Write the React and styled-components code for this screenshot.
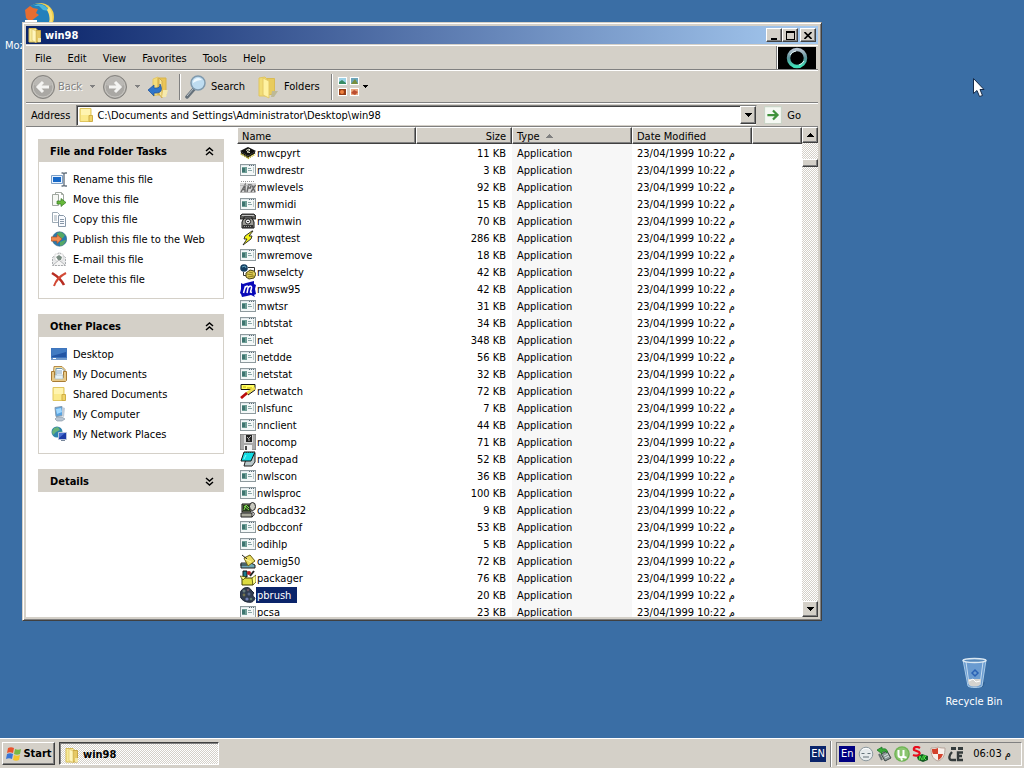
import React from "react";
import styled, { createGlobalStyle } from "styled-components";

const GlobalStyle = createGlobalStyle`
  * {
    box-sizing: border-box;
  }

  body {
    margin: 0;
    overflow: hidden;
    background: #3a6ea5;
    color: #000;
    font-family: "DejaVu Sans Condensed", "DejaVu Sans", sans-serif;
    font-size: 11px;
    line-height: 13px;
  }

  button,
  input {
    font: inherit;
    color: inherit;
    border-radius: 0;
  }

  svg {
    display: block;
    flex: none;
  }
`;

/* ---------- small icons, all on a 16px grid ---------- */

const glyphs = {
  folder: (
    <>
      <path d="M2 1.5h7l1 1V15H2z" fill="#f8eb9a" stroke="#d8bd55" />
      <path d="M9 3.5h4.5V15H9z" fill="#e6c964" stroke="#c9a843" />
      <path d="M5 2l4 2v11.5l-4-2z" fill="#fff6bd" stroke="#dcc467" strokeWidth=".7" />
      <path d="M11 11h3v4h-3z" fill="#f4e7a6" />
    </>
  ),
  folderClosed: (
    <>
      <path d="M2 1.5h11v13H2z" fill="#fbea8c" stroke="#e0c55f" />
      <path d="M3 2h9v6H3z" fill="#fff4b0" />
      <path d="M11 8.5h3.5v6H11z" fill="#f0d468" stroke="#cfae45" />
    </>
  ),
  app: (
    <g shapeRendering="crispEdges">
      <path d="M0 2h16v12H0z" fill="#8e9a9e" />
      <path d="M1 3h14v10H1z" fill="#f4f8f8" />
      <path d="M1 3h14v1H1z" fill="#dfe7ea" />
      <path d="M9 3h1v1H9zM11 3h1v1h-1zM13 3h1v1h-1z" fill="#5c6c78" />
      <path d="M2 5h5v6H2z" fill="#6f9f97" />
      <path d="M2 6h3v4H2z" fill="#3d746f" />
      <path d="M8 6h3v1H8zM8 8h4v1H8z" fill="#8aa7a7" />
      <path d="M13 5h1v6h-1z" fill="#bccaca" />
    </g>
  ),
  chip: (
    <>
      <path d="M0 6l8-4 8 4-8 5z" fill="#111" />
      <path d="M1 7.5l7 4.500 7-4.500" fill="none" stroke="#111" strokeWidth="1.500" />
      <path d="M1 9l7 4 7-4" fill="none" stroke="#b5a91c" strokeWidth="2" strokeDasharray="1 1" />
      <path d="M6 5.500l3-1.500 1 1-3 2 3 .500" stroke="#e8e8d0" fill="none" />
    </>
  ),
  apx: (
    <>
      <path d="M0 4h16v10H0z" fill="#d8d8d8" />
      <path d="M1 2.500h14" stroke="#999" strokeDasharray="1 1" />
      <path d="M1 13l4-7v7M3 10.500h2M7 13l1.500-7H11l-.500 3H8M15.500 6L11 13M12 6l3 7" fill="none" stroke="#666" strokeWidth="1.400" />
      <path d="M0 6.500h15M0 13.500h15" stroke="#aaa" strokeWidth=".700" />
    </>
  ),
  phone: (
    <>
      <path d="M4 5h8l2 4v6H2V9z" fill="#9a9a94" stroke="#111" />
      <path d="M0 6V3l2-2h12l2 2v3h-4V4H4v2z" fill="#5d5d5a" stroke="#111" strokeWidth=".8" />
      <path d="M2 2.500h12" stroke="#ddd" strokeWidth=".8" />
      <circle cx="8" cy="8.500" r="2.600" fill="#eee" stroke="#222" />
      <path d="M7 8h2v1H7z" fill="#333" />
      <path d="M3 12h10v3H3z" fill="#333" />
      <path d="M4 13.500h8" stroke="#999" strokeDasharray="1 1" />
    </>
  ),
  bolt: <path d="M12 1L5 6l-1 3h3l-4 6 8-6 1-3H9l4-5z" fill="#f6f619" stroke="#222" strokeWidth=".9" />,
  netTools: (
    <>
      <circle cx="4" cy="4" r="3.800" fill="#143f62" />
      <path d="M2 3l3-1 1 2" stroke="#61a4be" fill="none" />
      <path d="M8 3.500h6.500V7M3.500 8v3.500H7" fill="none" stroke="#333" />
      <path d="M6 9l4-3 4 1 2 3-2 4-5 1-3-2z" fill="#dccb54" stroke="#4a4417" />
      <path d="M7 10l6 1M8 13l6-1M9 8l4 1" stroke="#8f7e22" />
    </>
  ),
  mwave: (
    <>
      <path d="M1 2l2 1 3-1 8-2v3l2 1-1 4 1 5-2 1 1 2-4-2-4 1-5 1-1-3-1-1 1-4z" fill="#0808b8" />
      <path d="M3.500 12l2-7M5 7c2-3 3.500-2 3 0l-1 5M8 7c2-3 4-2 3.500 0l-1 4 1.500.500" fill="none" stroke="#fff" strokeWidth="1.500" />
    </>
  ),
  wand: (
    <>
      <path d="M1 1.500h14v5H1z" fill="#ffff60" stroke="#111" />
      <path d="M3 4h3M7 5h5" stroke="#c7a700" />
      <path d="M15 5l-9 6" stroke="#eedc52" strokeWidth="3" />
      <path d="M7 10l-6 5" stroke="#b90d0d" strokeWidth="2.800" />
      <path d="M15 7l-7 5" stroke="#111" />
    </>
  ),
  floppy: (
    <>
      <path d="M0 0h16v16H0z" fill="#a9a9a9" stroke="#777" />
      <path d="M4 1h9v8H4z" fill="#d9d9d9" />
      <path d="M6 1h6v7H6z" fill="#222" />
      <path d="M7 3l2 2v2M11 2L9 4" stroke="#ddd" strokeWidth=".8" fill="none" />
      <path d="M4 11h8v5H4z" fill="#f2f2f2" />
      <path d="M5 12h2v4H5z" fill="#444" />
    </>
  ),
  notepad: (
    <>
      <path d="M7 4l8-2v9l-3 4H4z" fill="#b9c7c9" stroke="#222" />
      <path d="M4 1h11l-4 9H1z" fill="#14dce3" stroke="#111" />
      <path d="M4 1.500h11" stroke="#333" strokeDasharray="1 1" />
      <path d="M6 4L4 8" stroke="#8bffff" />
    </>
  ),
  odbc: (
    <>
      <path d="M2 2h9v8H2z" fill="#8f9975" stroke="#111" />
      <path d="M3 3h7v6H3z" fill="#263a20" />
      <path d="M4 8l2-5 3 3M4 4l5 4" stroke="#82e34f" fill="none" />
      <path d="M1 11h11v4H1z" fill="#a9a99b" stroke="#222" />
      <ellipse cx="12.500" cy="4.500" rx="3" ry="4" fill="#c9c9bf" stroke="#222" />
      <path d="M12 10c3 0 3 3 0 5" fill="none" stroke="#111" />
    </>
  ),
  envelope: (
    <>
      <path d="M1 10h10l4 2v3H1z" fill="#70a8b5" stroke="#222" />
      <path d="M4 5l6-3 5 6-7 5z" fill="#e9db5e" stroke="#6c6115" />
      <path d="M2 2l5 4M0 12h7" stroke="#222" />
      <path d="M5 6l6 3" stroke="#fff7a1" />
    </>
  ),
  packager: (
    <>
      <path d="M3 1h4v6H3z" fill="#1b7c8e" stroke="#111" />
      <circle cx="9" cy="3" r="2" fill="#b82022" />
      <path d="M10 6l4-5" stroke="#222" strokeWidth="2" />
      <path d="M2 8h11v7H2z" fill="#dddc42" stroke="#424000" />
      <path d="M0 6l6 1-3 3zM12 8l4-3v7l-3 3z" fill="#ffff8b" stroke="#424000" strokeWidth=".7" />
    </>
  ),
  palette: (
    <>
      <path d="M1 4C4-1 10 0 11 3l3 3c-2 2-1 3 1 5-1 4-4 5-8 4C2 14-2 9 1 4z" fill="#303c50" stroke="#1b2538" />
      <circle cx="4" cy="4" r="1.500" fill="#657a7b" />
      <circle cx="8" cy="3" r="1.200" fill="#6a5966" />
      <circle cx="4" cy="8" r="1.400" fill="#73724e" />
      <circle cx="7" cy="12" r="1.600" fill="#7080b5" />
      <circle cx="11" cy="12" r="1.300" fill="#5b7b67" />
      <circle cx="9" cy="7" r="1.500" fill="#59688a" />
    </>
  ),
  rename: (
    <>
      <path d="M.5 4.500h11v8H.5z" fill="#e7f2ff" stroke="#7c9fc6" />
      <path d="M2 6h8v5H2z" fill="#1769c8" />
      <path d="M10.500 2h1.500l1 1 1-1h2M13 3v11M10.500 15h1.500l1-1 1 1h2" fill="none" stroke="#687582" strokeWidth="1.400" />
    </>
  ),
  move: (
    <>
      <path d="M4.500 1.500h6l2 2v8h-8z" fill="#fff" stroke="#a0a79f" />
      <path d="M1.500 3.500h6v11h-6z" fill="#f6f8f4" stroke="#a0a79f" />
      <path d="M10.500 1.500v2h2" fill="none" stroke="#a0a79f" />
      <path d="M6 10h4V7.500l5 4-5 4V13H6z" fill="#67b83a" stroke="#347823" strokeWidth=".7" />
    </>
  ),
  copy: (
    <>
      <path d="M1.500 1.500h5l2 2v8h-7z" fill="#fff" stroke="#9daab5" />
      <path d="M3 5h3M3 7h3M3 9h3" stroke="#9daab5" />
      <path d="M7.500 4.500h5l2 2v9h-7z" fill="#f9fbff" stroke="#8998a8" />
      <path d="M9 8.500h4M9 10.500h4M9 12.500h4" stroke="#8998a8" />
    </>
  ),
  publish: (
    <>
      <circle cx="8.500" cy="8" r="7.200" fill="#267aaf" stroke="#33627b" strokeWidth=".6" />
      <path d="M6 2l4-1 4 3-2 3-3 1-2-2zM9 11l5-2 1 1-3 4-3 1z" fill="#55a866" />
      <path d="M0 6h6V3.500l5 4.500-5 4.500V10H0z" fill="#f08b52" stroke="#b55024" strokeWidth=".7" />
    </>
  ),
  mail: (
    <>
      <path d="M1.500 6.500l7-5 6 5v8h-13z" fill="#e9eaeb" stroke="#a6a9ac" strokeDasharray="2 1" />
      <path d="M4 3h8v6l-4 2-4-2z" fill="#fff" stroke="#cbcbcb" strokeWidth=".6" />
      <path d="M5 6l3-2 3 2-1 3H7z" fill="#788b80" />
      <path d="M2 14l6-5 6 5" fill="#f5f5f5" stroke="#b4b6b8" />
    </>
  ),
  remove: (
    <>
      <path d="M1 2c5 3 9 6 12 12" fill="none" stroke="#b82d22" strokeWidth="2.600" />
      <path d="M15 2C9 5 5 9 3 15" fill="none" stroke="#d34a36" strokeWidth="2" />
    </>
  ),
  desktop: (
    <>
      <path d="M0 2h16v12H0z" fill="#3f75bd" />
      <path d="M1 3h14v8H1z" fill="#2456a4" />
      <path d="M1 3h14v3L1 10z" fill="#427bc2" />
      <path d="M0 12h16v2H0z" fill="#739acb" />
      <path d="M2 12h3v1H2z" fill="#fff" />
    </>
  ),
  documents: (
    <>
      <path d="M3 .500h8l3 3v9H2z" fill="#f4e2a5" stroke="#b58b48" />
      <path d="M5 2.500h6l2 2v7H5z" fill="#fafdff" stroke="#7096af" />
      <path d="M6 5h5M6 7h5" stroke="#83a6c3" />
      <path d="M.500 5.500h3v6h9v-6h3v9l-1 1h-13l-1-1z" fill="#e8c987" stroke="#a97c34" />
      <path d="M4 9h8v4H4z" fill="#e6f2f6" stroke="#9db4bd" strokeWidth=".600" />
    </>
  ),
  computer: (
    <>
      <path d="M4 1.500l7-1 1 9-7 1z" fill="#59a4e2" stroke="#8399ad" />
      <path d="M5 3l5-1 1 4-5 2z" fill="#a0d8ff" />
      <path d="M11 1l3 1-1 9-2-1z" fill="#c0cbd7" />
      <path d="M6 11h5l3 2-3 2H6l-2-2z" fill="#bac6d3" stroke="#7d8e9e" strokeWidth=".600" />
    </>
  ),
  network: (
    <>
      <circle cx="6" cy="6" r="5.500" fill="#2e83ac" />
      <path d="M3 2l4-1 2 3-4 2-3 3-1-3zM7 7l4-2-2 5z" fill="#67b37a" />
      <path d="M7.500 6.500h8v7h-8z" fill="#1c3ba6" stroke="#bac6dd" />
      <path d="M8 7h6l-6 5z" fill="#496fd1" />
      <path d="M10 14h4v1h-4z" fill="#77869a" />
    </>
  ),
  flag: (
    <>
      <path d="M3 2c2-1 4-1 6 0L8 7c-2-1-4-1-6 0z" fill="#e8542e" />
      <path d="M10 3c2 1 4 1 6 0l-1 5c-2 1-4 1-6 0z" fill="#79b943" />
      <path d="M2 8c2-1 4-1 6 0l-1 5c-2-1-4-1-6 0z" fill="#3975d5" />
      <path d="M9 9c2 1 4 1 6 0l-1 5c-2 1-4 1-6 0z" fill="#f4c52d" />
    </>
  ),
  face: (
    <>
      <circle cx="8" cy="8" r="6.800" fill="#e5eaec" stroke="#8d999f" />
      <path d="M3.500 7.500h3M9.500 7.500h3M5 11h6" stroke="#64737b" />
      <path d="M4 4c2-2 6-2 8 0" stroke="#fff" fill="none" />
    </>
  ),
  device: (
    <>
      <path d="M5 8l6-3 4 7-6 3z" fill="#8d9999" stroke="#3d4848" />
      <path d="M8 10l4-2M9 12l4-2" stroke="#dce4e4" />
      <path d="M1 4l5-3v2c4-1 6 1 5 4-1-2-3-2-5-1v2z" fill="#38aa37" stroke="#157220" strokeWidth=".7" />
      <path d="M3 8l3 6" stroke="#667171" strokeWidth="2" />
    </>
  ),
  torrent: (
    <>
      <circle cx="8" cy="8" r="7.800" fill="#6eb353" />
      <circle cx="8" cy="8" r="6.500" fill="#8bc570" />
      <path d="M4.500 4v5c0 3 5 3 5 0V4M9.500 9c0 2 1 3 3 2M7 11l1 3.500" fill="none" stroke="#fff" strokeWidth="2" />
    </>
  ),
  sound: (
    <>
      <path d="M8 2C5 0 1 1 2 4l5 2c2 2-1 5-6 3" fill="none" stroke="#e80c1c" strokeWidth="2.200" />
      <path d="M5 11l5-3 6 2v4l-5 2-5-2z" fill="#145b22" />
      <path d="M7 14l1-4 2 4M11 10v4M11 10h3l-2 2 2 2" fill="none" stroke="#4dec42" />
    </>
  ),
  shield: (
    <>
      <path d="M1 2c3 0 5 0 7-1 2 1 4 1 7 1 0 6-1 11-7 13C2 13 1 8 1 2z" fill="#f7efea" stroke="#b7a49a" />
      <path d="M2 3c2 0 4 0 6-1v6H3C2 6 2 5 2 3zM8 8h5c-1 3-2 5-5 6z" fill="#d3422c" />
    </>
  ),
  lang: (
    <>
      <path d="M3 1h5v3H3zM10 1h5v3h-5z" fill="#333b3c" />
      <path d="M4 6c-3 3-4 8 0 8h4M15 6.500h-5v7.500h5M10 10h4" fill="none" stroke="#343b3b" strokeWidth="2.400" />
    </>
  ),
  go: (
    <>
      <path d="M.500.500h15v15H.500z" fill="#f5f8f3" stroke="#cbd5c8" />
      <path d="M3 8h8M8 4l4 4-4 4" fill="none" stroke="#40913b" strokeWidth="2" />
    </>
  ),
};

const Icon = ({ name, size = 16 }) => (
  <svg width={size} height={size} viewBox="0 0 16 16" aria-hidden="true">
    {glyphs[name]}
  </svg>
);

const Caret = ({ up, color = "#000" }) => (
  <svg width="7" height="4" viewBox="0 0 7 4" shapeRendering="crispEdges" aria-hidden="true">
    <path d={up ? "M3 0h1v1h1v1h1v1h1v1H0V3h1V2h1V1h1z" : "M0 0h7v1H6v1H5v1H4v1H3V3H2V2H1V1H0z"} fill={color} />
  </svg>
);

const SmallCaret = ({ color = "#000" }) => (
  <svg width="5" height="3" viewBox="0 0 5 3" shapeRendering="crispEdges" aria-hidden="true">
    <path d="M0 0h5v1H4v1H3v1H2V2H1V1H0z" fill={color} />
  </svg>
);

const Chevrons = ({ down }) => (
  <svg width="9" height="9" viewBox="0 0 9 9" aria-hidden="true">
    <path
      d={down ? "M1 1l3.500 3L8 1M1 5l3.500 3L8 5" : "M1 4l3.500-3L8 4M1 8l3.500-3L8 8"}
      fill="none"
      stroke="#000"
      strokeWidth="1.500"
    />
  </svg>
);

const RoundArrow = ({ forward }) => (
  <svg width="26" height="26" viewBox="0 0 26 26" aria-hidden="true">
    <circle cx="13" cy="13" r="11.500" fill="#aaa8a4" stroke="#85837f" />
    <circle cx="13" cy="13" r="10" fill="none" stroke="#c8c6c1" />
    <path d="M4 11a9 8 0 0 1 18 0c-5 2-12 2-18 0z" fill="#bab8b4" />
    <path
      d={forward ? "M7 13h11M13 8l5 5-5 5" : "M19 13H8M13 8l-5 5 5 5"}
      fill="none"
      stroke="#f4f4f2"
      strokeWidth="3"
    />
  </svg>
);

const UpFolder = () => (
  <svg width="22" height="24" viewBox="0 0 22 24" aria-hidden="true">
    <path d="M5 4l5-2v18l-5 1z" fill="#f4dc79" stroke="#e3c769" />
    <path d="M10 3h8v17h-8z" fill="#eac557" stroke="#d8b44d" />
    <path d="M11 3l3 3v17l-3-4z" fill="#f8e69a" stroke="#d2ae4c" />
    <path d="M15 15h5l-2 7h-4z" fill="#f5e9ae" />
    <path d="M0 15l6-5v3h2c3 0 4-1 4-4 3 6 1 9-4 9H6v3z" fill="#2f75c9" stroke="#1c4f98" strokeWidth=".700" />
  </svg>
);

const Magnifier = () => (
  <svg width="22" height="24" viewBox="0 0 22 24" aria-hidden="true">
    <path d="M9 14l-7 8" stroke="#66717a" strokeWidth="3.500" strokeLinecap="round" />
    <path d="M8 14l-6 7" stroke="#b9c2c8" />
    <circle cx="13" cy="8" r="7" fill="#bedcf0" stroke="#7f99ad" strokeWidth="1.500" />
    <path d="M8 8a5 5 0 0 1 9-3c-3 0-6 1-9 3z" fill="#eff9ff" />
  </svg>
);

const FoldersIcon = () => (
  <svg width="24" height="24" viewBox="0 0 24 24" aria-hidden="true">
    <path d="M1 3l6-1 2 2v17H1z" fill="#f1dc75" stroke="#e0c560" />
    <path d="M9 3.500h7.500v16H9z" fill="#e8cb5d" stroke="#d9bb55" />
    <path d="M5 3l6 3v17l-6-3z" fill="#fff2a2" stroke="#e4c968" />
    <path d="M14 16h6l-4 6h-3z" fill="#bdb997" />
  </svg>
);

const ViewsIcon = () => (
  <svg width="23" height="22" viewBox="0 0 23 22" aria-hidden="true">
    <path d="M.500.500h10v9H.500zM12.500.500h10v9h-10zM.500 11.500h10v9H.500zM12.500 11.500h10v9h-10z" fill="#fff" stroke="#d6d3cc" />
    <path d="M2 2h7v6H2z" fill="#9cd2e7" />
    <path d="M2 6l3-2 4 3v1H2z" fill="#388b63" />
    <path d="M14 2h7v6h-7z" fill="#6ca5bb" />
    <path d="M14 8l4-5 3 5z" fill="#788f3c" />
    <path d="M2 13h7v6H2z" fill="#963e17" />
    <circle cx="5" cy="16" r="2" fill="#ef813f" />
    <path d="M14 13h7v6h-7z" fill="#e9a47c" />
    <path d="M14 17l3-3 4 2-3 3z" fill="#bc4e31" />
  </svg>
);

const Throbber = () => (
  <svg width="38" height="22" viewBox="0 0 38 22" aria-hidden="true">
    <defs>
      <linearGradient id="ring" x1="0" y1="0" x2="0" y2="1">
        <stop offset="0" stopColor="#b4c0cd" />
        <stop offset=".5" stopColor="#5a929a" />
        <stop offset="1" stopColor="#3fe0b8" />
      </linearGradient>
    </defs>
    <path d="M0 0h38v22H0z" fill="#000" />
    <circle cx="19" cy="11" r="8.500" fill="none" stroke="url(#ring)" strokeWidth="3.500" />
    <path d="M12 8a8 8 0 0 1 6-4M26 14a8 8 0 0 1-5 4" fill="none" stroke="#e4f4f4" />
  </svg>
);

const Firefox = () => (
  <svg width="32" height="32" viewBox="0 0 32 32" aria-hidden="true">
    <circle cx="16" cy="16" r="14" fill="#f2cf4b" />
    <circle cx="14" cy="15" r="12.500" fill="#2380bb" />
    <path d="M10 5c6-4 13 0 15 5l-6-1-4-4z" fill="#4ab6dc" />
    <path d="M1 9l5-4 3 2 5 1-2 4 3 2-4 3-5 4-4-4z" fill="#e76d31" />
    <path d="M25 6c4 6 5 15 0 20 1-7 1-12-2-17z" fill="#f9e078" />
    <path d="M1 19h12v10H1z" fill="#fff" />
  </svg>
);

const Bin = () => (
  <svg width="32" height="32" viewBox="0 0 32 32" aria-hidden="true">
    <path d="M18 29l9-4-2 5z" fill="#315f91" />
    <path d="M5 3h23l-4 26c-2 2-12 2-14 0z" fill="#6a9bd0" stroke="#a9cbe8" />
    <path d="M8 5l3 22M25 5l-3 23" stroke="#c5dcf0" />
    <ellipse cx="16.500" cy="3.500" rx="11.500" ry="2" fill="#5688ba" stroke="#dbe8f2" strokeWidth="1.500" />
    <path d="M10 22h13l-1 6c-3 2-8 2-11 0z" fill="#d5d3cf" />
    <path d="M14 16l3-3 3 3-3 3z" fill="none" stroke="#2a62b5" strokeWidth="1.500" />
    <path d="M11 24l4-2 3 3 4-1" stroke="#fff" fill="none" />
  </svg>
);

/* ---------- desktop ---------- */

const Desktop = styled.main`
  position: relative;
  display: flex;
  flex-direction: column;
  height: 100vh;
  overflow: hidden;
`;

const Canvas = styled.div`
  position: relative;
  flex: 1;
  min-height: 0;
`;

const Shortcut = styled.a`
  position: absolute;
  top: ${(p) => p.$top};
  left: ${(p) => p.$left};
  right: ${(p) => p.$right};
  bottom: ${(p) => p.$bottom};
  display: flex;
  flex-direction: column;
  align-items: center;
  gap: 6px;
  width: 80px;
  color: #fff;
  text-decoration: none;
  white-space: nowrap;
`;

const Pointer = styled.svg`
  position: absolute;
  top: 78px;
  right: 39px;
`;

const Window = styled.section`
  position: absolute;
  top: 22px;
  right: 202px;
  bottom: 117px;
  left: 22px;
  display: flex;
  flex-direction: column;
  padding: 3px;
  overflow: hidden;
  background: #d4d0c8;
  border: 1px solid;
  border-color: #d4d0c8 #404040 #404040 #d4d0c8;
  box-shadow: inset 1px 1px #fff, inset -1px -1px #808080;
`;

const TitleBar = styled.header`
  display: flex;
  align-items: center;
  flex: none;
  height: 18px;
  margin-bottom: 1px;
  padding: 0 2px 0 1px;
  background: linear-gradient(to right, #0a246a, #a6caf0);
  color: #fff;
`;

const Title = styled.h1`
  flex: 1;
  margin: 0 0 0 2px;
  font-size: 11px;
  font-weight: bold;
`;

const Raised = styled.button`
  display: flex;
  align-items: center;
  justify-content: center;
  flex: none;
  width: ${(p) => p.$width || 16}px;
  height: ${(p) => p.$height || 16}px;
  padding: 0;
  background: #d4d0c8;
  border: 1px solid;
  border-color: #fff #404040 #404040 #fff;
  box-shadow: inset -1px -1px #808080;
`;

const CaptionButtons = styled.div`
  display: flex;

  button:last-child {
    margin-left: 2px;
  }
`;

const MenuBar = styled.nav`
  display: flex;
  align-items: stretch;
  flex: none;
  height: 25px;
  padding-right: 2px;
  border-top: 1px solid #fff;
  border-bottom: 1px solid #808080;
`;

const MenuItems = styled.div`
  display: flex;
  align-items: center;
  flex: 1;
  padding: 2px 0 0 1px;
  border-right: 1px solid #808080;
`;

const MenuItem = styled.button`
  height: 19px;
  padding: 0 8px;
  background: none;
  border: 0;
`;

const ThrobberBox = styled.div`
  display: flex;
  align-items: center;
  border-left: 1px solid #fff;
`;

const Toolbar = styled.div`
  display: flex;
  align-items: center;
  flex: none;
  height: 33px;
  padding-left: 4px;
  border-top: 1px solid #fff;
  border-bottom: 1px solid #808080;
`;

const Tool = styled.button`
  display: flex;
  align-items: center;
  gap: ${(p) => p.$gap || 2}px;
  height: 26px;
  padding: 0;
  margin-right: ${(p) => p.$after || 0}px;
  background: none;
  border: 0;
  white-space: nowrap;

  &:disabled {
    color: #808080;
    text-shadow: 1px 1px #fff;
  }
`;

const Divider = styled.span`
  width: 2px;
  height: 26px;
  margin-right: 4px;
  border-left: 1px solid #808080;
  border-right: 1px solid #fff;
`;

const AddressBar = styled.form`
  display: flex;
  align-items: center;
  flex: none;
  height: 23px;
  padding: 0 17px 0 5px;
  border-top: 1px solid #fff;
`;

const AddressBox = styled.div`
  display: flex;
  align-items: center;
  flex: 1;
  height: 21px;
  margin: 0 7px 0 6px;
  padding-left: 1px;
  background: #fff;
  border: 1px solid;
  border-color: #808080 #d4d0c8 #d4d0c8 #808080;
  box-shadow: inset 1px 1px #404040;
`;

const AddressInput = styled.input`
  flex: 1;
  min-width: 0;
  height: 17px;
  padding: 0 0 0 3px;
  background: none;
  border: 0;
  outline: 0;
`;

const Body = styled.div`
  display: flex;
  flex: 1;
  min-height: 0;
  background: #fff;
  border-top: 1px solid #808080;
`;

/* ---------- task pane ---------- */

const TaskPane = styled.aside`
  display: flex;
  flex-direction: column;
  gap: 15px;
  flex: none;
  width: 211px;
  padding: 12px 13px 0 12px;
`;

const Panel = styled.section`
  background: #fff;
`;

const PanelHead = styled.button`
  display: flex;
  align-items: center;
  justify-content: space-between;
  width: 100%;
  height: 23px;
  padding: 2px 10px 0 12px;
  background: #d4d0c8;
  border: 0;
  font-weight: bold;
`;

const PanelList = styled.ul`
  margin: 0;
  padding: 7px 0 9px 12px;
  list-style: none;
  border: 1px solid #d4d0c8;
  border-top: 0;
`;

const PanelLink = styled.a`
  display: flex;
  align-items: center;
  gap: 6px;
  height: 20px;
  color: #000;
  text-decoration: none;
  white-space: nowrap;
`;

/* ---------- file list ---------- */

const ListArea = styled.div`
  flex: 1;
  min-width: 0;
  overflow: hidden;
`;

const FileTable = styled.table`
  width: 100%;
  table-layout: fixed;
  border-collapse: separate;
  border-spacing: 0;
`;

const Col = styled.col`
  width: ${(p) => p.$width};
`;

const Th = styled.th`
  height: 17px;
  padding: 1px 5px 0 4px;
  background: #d4d0c8;
  border: 1px solid;
  border-color: #fff #404040 #404040 #fff;
  box-shadow: inset -1px -1px #808080;
  font-weight: normal;
  text-align: ${(p) => p.$align || "left"};

  svg {
    display: inline-block;
    margin-left: 6px;
    vertical-align: 2px;
  }
`;

const Td = styled.td`
  height: 17px;
  padding: 2px 6px 0 5px;
  background: ${(p) => (p.$sorted ? "#f7f7f7" : "#fff")};
  text-align: ${(p) => p.$align || "left"};
  white-space: nowrap;
`;

const FileCell = styled(Td)`
  padding: 0 0 0 3px;
`;

const FileName = styled.div`
  display: flex;
  align-items: center;
  height: 17px;

  span {
    height: 16px;
    padding: 2px 6px 0 1px;
    line-height: 13px;
    background: ${(p) => (p.$selected ? "#0a246a" : "none")};
    color: ${(p) => (p.$selected ? "#fff" : "#000")};
  }
`;

const dither = `
  background: conic-gradient(#fff 25%, #d4d0c8 0 50%, #fff 0 75%, #d4d0c8 0) 0 0 / 2px 2px;
`;

const ScrollBar = styled.div`
  display: flex;
  flex-direction: column;
  flex: none;
  width: 16px;
  ${dither}
`;

const ScrollGap = styled.div`
  flex: ${(p) => p.$grow};
`;

/* ---------- taskbar ---------- */

const TaskBar = styled.footer`
  display: flex;
  align-items: center;
  flex: none;
  height: 30px;
  padding: 0 2px;
  background: #d4d0c8;
  border-top: 1px solid #fff;
`;

const StartButton = styled(Raised)`
  width: 53px;
  height: 23px;
  margin-right: 4px;
  gap: 2px;
  font-weight: bold;
`;

const TaskButton = styled.button`
  display: flex;
  align-items: center;
  gap: 3px;
  width: 160px;
  height: 23px;
  padding: 2px 4px 0;
  border: 1px solid;
  border-color: #404040 #fff #fff #404040;
  box-shadow: inset 1px 1px #808080;
  font-weight: bold;
  ${dither}
`;

const Language = styled.button`
  width: 16px;
  height: 16px;
  margin: 0 4px 0 auto;
  padding: 0;
  background: ${(p) => p.$color};
  border: 0;
  color: #fff;
  text-align: center;
`;

const Tray = styled.div`
  display: flex;
  align-items: center;
  gap: 2px;
  height: 24px;
  padding: 0 10px 0 2px;
  border: 1px solid;
  border-color: #808080 #fff #fff #808080;

  ${Language} {
    margin: 0 1px 0 0;
  }

  time {
    margin-left: 7px;
  }
`;

const tasks = [
  ["rename", "Rename this file"],
  ["move", "Move this file"],
  ["copy", "Copy this file"],
  ["publish", "Publish this file to the Web"],
  ["mail", "E-mail this file"],
  ["remove", "Delete this file"],
];

const places = [
  ["desktop", "Desktop"],
  ["documents", "My Documents"],
  ["folderClosed", "Shared Documents"],
  ["computer", "My Computer"],
  ["network", "My Network Places"],
];

const files = [
  ["mwcpyrt", 11, "chip"],
  ["mwdrestr", 3],
  ["mwlevels", 92, "apx"],
  ["mwmidi", 15],
  ["mwmwin", 70, "phone"],
  ["mwqtest", 286, "bolt"],
  ["mwremove", 18],
  ["mwselcty", 42, "netTools"],
  ["mwsw95", 42, "mwave"],
  ["mwtsr", 31],
  ["nbtstat", 34],
  ["net", 348],
  ["netdde", 56],
  ["netstat", 32],
  ["netwatch", 72, "wand"],
  ["nlsfunc", 7],
  ["nnclient", 44],
  ["nocomp", 71, "floppy"],
  ["notepad", 52, "notepad"],
  ["nwlscon", 36],
  ["nwlsproc", 100],
  ["odbcad32", 9, "odbc"],
  ["odbcconf", 53],
  ["odihlp", 5],
  ["oemig50", 72, "envelope"],
  ["packager", 76, "packager"],
  ["pbrush", 20, "palette"],
  ["pcsa", 23],
];

const menus = ["File", "Edit", "View", "Favorites", "Tools", "Help"];

const TaskPanel = ({ title, items }) => (
  <Panel>
    <PanelHead type="button" aria-expanded={Boolean(items)}>
      {title}
      <Chevrons down={!items} />
    </PanelHead>
    {items && (
      <PanelList>
        {items.map(([icon, label]) => (
          <li key={label}>
            <PanelLink href="#">
              <Icon name={icon} />
              {label}
            </PanelLink>
          </li>
        ))}
      </PanelList>
    )}
  </Panel>
);

const FileList = () => (
  <ListArea>
    <FileTable>
      <colgroup>
        <Col $width="179px" />
        <Col $width="96px" />
        <Col $width="120px" />
        <Col $width="120px" />
        <Col $width="auto" />
      </colgroup>
      <thead>
        <tr>
          <Th>Name</Th>
          <Th $align="right">Size</Th>
          <Th>
            Type
            <Caret up color="#808080" />
          </Th>
          <Th>Date Modified</Th>
          <Th aria-label="Empty" />
        </tr>
      </thead>
      <tbody>
        {files.map(([name, size, icon = "app"]) => (
          <tr key={name}>
            <FileCell>
              <FileName $selected={name === "pbrush"}>
                <Icon name={icon} />
                <span>{name}</span>
              </FileName>
            </FileCell>
            <Td $align="right">{size} KB</Td>
            <Td $sorted>Application</Td>
            <Td>23/04/1999 10:22 م</Td>
            <Td />
          </tr>
        ))}
      </tbody>
    </FileTable>
  </ListArea>
);

const Explorer = () => (
  <Window>
    <TitleBar>
      <Icon name="folder" />
      <Title>win98</Title>
      <CaptionButtons>
        <Raised type="button" $height={14} aria-label="Minimize">
          <svg width="10" height="9" viewBox="0 0 10 9">
            <path d="M2 7h6v2H2z" />
          </svg>
        </Raised>
        <Raised type="button" $height={14} aria-label="Maximize">
          <svg width="9" height="9" viewBox="0 0 9 9" shapeRendering="crispEdges">
            <path d="M0 0h9v9H0zM1 2v6h7V2z" fillRule="evenodd" />
          </svg>
        </Raised>
        <Raised type="button" $height={14} aria-label="Close">
          <svg width="8" height="7" viewBox="0 0 8 7">
            <path d="M.500 0l7 7M7.500 0l-7 7" stroke="#000" strokeWidth="1.600" />
          </svg>
        </Raised>
      </CaptionButtons>
    </TitleBar>

    <MenuBar>
      <MenuItems>
        {menus.map((label) => (
          <MenuItem type="button" key={label}>
            {label}
          </MenuItem>
        ))}
      </MenuItems>
      <ThrobberBox>
        <Throbber />
      </ThrobberBox>
    </MenuBar>

    <Toolbar>
      <Tool type="button" disabled $after={8}>
        <RoundArrow />
        Back
      </Tool>
      <Tool type="button" disabled aria-label="Back history" $after={7}>
        <SmallCaret color="#808080" />
      </Tool>
      <Tool type="button" disabled aria-label="Forward" $after={7}>
        <RoundArrow forward />
      </Tool>
      <Tool type="button" disabled aria-label="Forward history" $after={8}>
        <SmallCaret color="#808080" />
      </Tool>
      <Tool type="button" aria-label="Up" $after={9}>
        <UpFolder />
      </Tool>
      <Divider />
      <Tool type="button" $gap={4} $after={13}>
        <Magnifier />
        Search
      </Tool>
      <Tool type="button" $after={11}>
        <FoldersIcon />
        Folders
      </Tool>
      <Divider />
      <Tool type="button" $gap={3} aria-label="Views">
        <ViewsIcon />
        <SmallCaret />
      </Tool>
    </Toolbar>

    <AddressBar onSubmit={(e) => e.preventDefault()}>
      <label htmlFor="address">Address</label>
      <AddressBox>
        <Icon name="folderClosed" />
        <AddressInput id="address" defaultValue="C:\Documents and Settings\Administrator\Desktop\win98" />
        <Raised type="button" $height={18} aria-label="Show addresses">
          <Caret />
        </Raised>
      </AddressBox>
      <Tool type="submit" $gap={5}>
        <Icon name="go" size={18} />
        Go
      </Tool>
    </AddressBar>

    <Body>
      <TaskPane>
        <TaskPanel title="File and Folder Tasks" items={tasks} />
        <TaskPanel title="Other Places" items={places} />
        <TaskPanel title="Details" />
      </TaskPane>
      <FileList />
      <ScrollBar>
        <Raised type="button" aria-label="Scroll up">
          <Caret up />
        </Raised>
        <ScrollGap $grow={16} />
        <Raised type="button" $height={8} aria-label="Scroll position" />
        <ScrollGap $grow={434} />
        <Raised type="button" aria-label="Scroll down">
          <Caret />
        </Raised>
      </ScrollBar>
    </Body>
  </Window>
);

const App = () => (
  <>
    <GlobalStyle />
    <Desktop>
      <Canvas>
        <Shortcut href="#" $top="1px" $left="0">
          <Firefox />
          Mozilla Firefox
        </Shortcut>
        <Shortcut href="#" $right="10px" $bottom="30px">
          <Bin />
          Recycle Bin
        </Shortcut>
        <Explorer />
        <Pointer width="12" height="20" viewBox="0 0 12 20" aria-hidden="true">
          <path d="M.500.500v15l3.500-3 2.500 6 3-1-2.500-6H11z" fill="#fff" stroke="#152a48" />
        </Pointer>
      </Canvas>
      <TaskBar>
        <StartButton type="button">
          <Icon name="flag" />
          Start
        </StartButton>
        <TaskButton type="button">
          <Icon name="folder" />
          win98
        </TaskButton>
        <Language type="button" $color="#0a246a">
          EN
        </Language>
        <Divider />
        <Tray>
          <Language type="button" $color="#000080">
            En
          </Language>
          <Icon name="face" />
          <Icon name="device" />
          <Icon name="torrent" />
          <Icon name="sound" />
          <Icon name="shield" />
          <Icon name="lang" />
          <time>06:03 م</time>
        </Tray>
      </TaskBar>
    </Desktop>
  </>
);

export default App;
